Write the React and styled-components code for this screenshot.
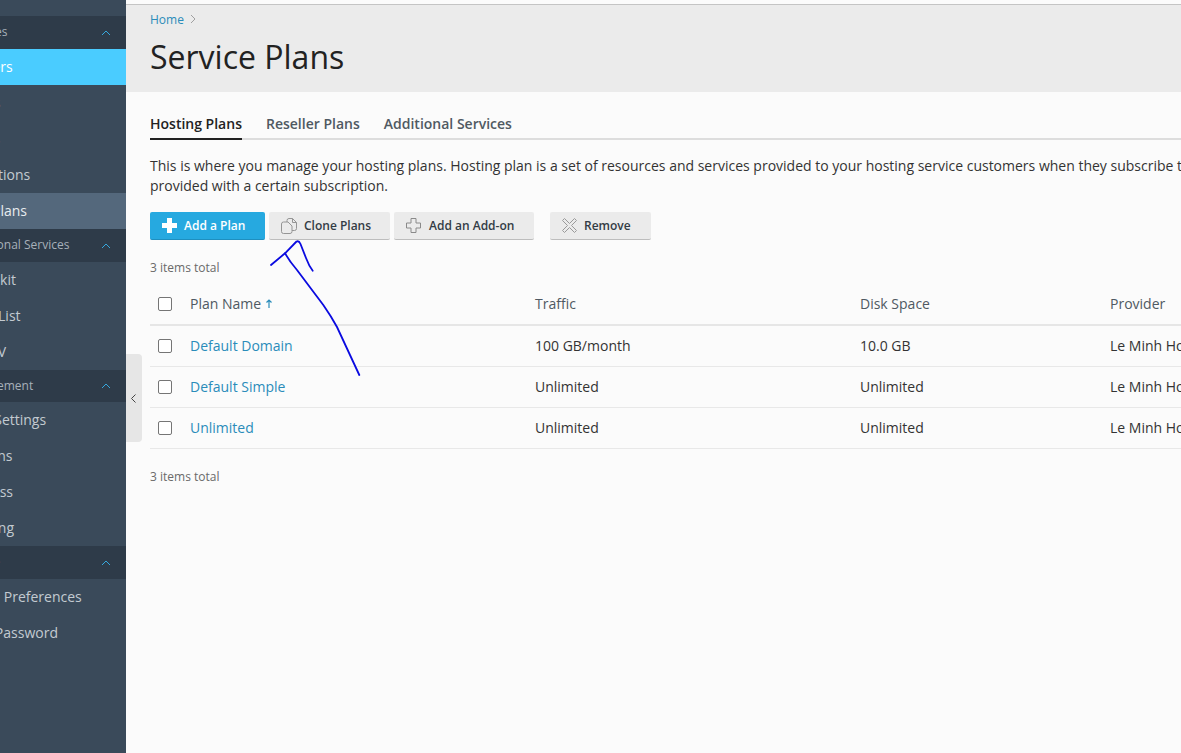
import React from "react";
import styled, { createGlobalStyle } from "styled-components";

const Global = createGlobalStyle`
  html, body { margin: 0; padding: 0; height: 100%; overflow: hidden; background: #fbfbfb; }
  #root { height: 100%; }
  * { box-sizing: border-box; }
  body { font-family: "Open Sans", "Liberation Sans", sans-serif; }
`;

const Page = styled.div`
  position: relative;
  display: flex;
  width: 1181px;
  height: 753px;
  overflow: hidden;
`;

const Sidebar = styled.nav`
  flex: 0 0 126px;
  background: #3a4a5a;
  padding-top: 16px;
  overflow: hidden;
`;

const SectionHead = styled.div`
  display: flex;
  align-items: center;
  height: ${(p) => p.$h || 33}px;
  background: #2e3b49;
  color: #a7b0b9;
  font-size: 12px;
  white-space: nowrap;
  padding-right: 15px;
`;

const SectionLabel = styled.span`
  flex: 1;
  margin-left: ${(p) => p.$offset}px;
  padding-bottom: 2px;
`;

const Item = styled.div`
  display: flex;
  align-items: center;
  height: 36px;
  padding-bottom: 2px;
  font-size: 14px;
  white-space: nowrap;
  background: ${(p) => (p.$primary ? "#4accff" : p.$current ? "#54687c" : "transparent")};
  color: ${(p) => (p.$primary ? "#ffffff" : p.$current ? "#e8ecef" : "#c3cad1")};
`;

const ItemLabel = styled.span`
  margin-left: -58px;
`;

const Main = styled.main`
  flex: 1;
  min-width: 0;
  overflow: hidden;
`;

const Header = styled.header`
  height: 92px;
  background: #ebebeb;
  border-top: 5px solid #c4c4c4;
  padding: 6px 24px 0;
  width: 1300px;
  position: relative;
  &::before {
    content: "";
    position: absolute;
    left: 0;
    right: 0;
    top: -5px;
    height: 4px;
    background: #fbfbfb;
  }
`;

const Breadcrumb = styled.div`
  display: flex;
  align-items: center;
  gap: 6px;
  height: 16px;
  font-size: 12px;
  color: #2a8cba;
`;

const Title = styled.h1`
  margin: 8px 0 0;
  font-size: 32px;
  font-weight: 400;
  line-height: 44px;
  color: #222222;
`;

const Content = styled.div`
  width: 1300px;
  padding: 0 0 0 24px;
`;

const Tabs = styled.div`
  display: flex;
  gap: 24px;
  margin-top: 22px;
  height: 26px;
  border-bottom: 2px solid #dddddd;
`;

const Tab = styled.div`
  height: 26px;
  font-size: 14px;
  line-height: 20px;
  font-weight: 600;
  color: ${(p) => (p.$active ? "#222222" : "#4f5962")};
  border-bottom: 2px solid ${(p) => (p.$active ? "#222222" : "transparent")};
`;

const Description = styled.p`
  margin: 16px 0 0;
  font-size: 14px;
  line-height: 20px;
  color: #333333;
  width: 1240px;
`;

const Toolbar = styled.div`
  display: flex;
  margin-top: 16px;
`;

const Button = styled.div`
  display: flex;
  align-items: center;
  gap: ${(p) => p.$gap || 7}px;
  width: ${(p) => p.$w}px;
  height: 28px;
  margin-right: ${(p) => p.$mr ?? 4}px;
  padding-left: ${(p) => p.$pl || 12}px;
  font-size: 12px;
  font-weight: 600;
  border-radius: 2px;
  background: ${(p) => (p.$primary ? "#26a9e0" : "#ebebeb")};
  color: ${(p) => (p.$primary ? "#ffffff" : "#333c45")};
  border-bottom: 1px solid ${(p) => (p.$primary ? "#1e8fc0" : "#bdbdbd")};
`;

const Count = styled.div`
  font-size: 12px;
  line-height: 16px;
  color: #6a6a6a;
  margin-top: ${(p) => p.$mt}px;
`;

const Table = styled.div`
  width: 1200px;
  margin-top: 8px;
`;

const Row = styled.div`
  display: grid;
  grid-template-columns: 40px 345px 325px 250px 1fr;
  align-items: center;
  height: ${(p) => (p.$head ? 42 : 41)}px;
  border-bottom: ${(p) => (p.$head ? "2px solid #e6e6e6" : "1px solid #e8e8e8")};
  font-size: 14px;
  color: #333333;
`;

const Box = styled.span`
  display: block;
  width: 14px;
  height: 14px;
  margin-left: 8px;
  background: #ffffff;
  border: 1.5px solid #757575;
  border-radius: 2px;
`;

const Cell = styled.div`
  padding-bottom: 2px;
`;

const HeadCell = styled(Cell)`
  color: #4f5962;
  display: flex;
  align-items: center;
  gap: 4px;
`;

const PlanLink = styled(Cell)`
  color: #2a8cba;
`;

const Handle = styled.div`
  position: absolute;
  left: 126px;
  top: 354px;
  width: 16px;
  height: 88px;
  background: #e6e6e6;
  border-radius: 0 4px 4px 0;
  display: flex;
  align-items: center;
  padding-left: 5px;
`;

const Scribble = styled.svg`
  position: absolute;
  left: 0;
  top: 0;
  pointer-events: none;
`;

const Chevron = () => (
  <svg width="10" height="6" viewBox="0 0 10 6" fill="none" stroke="#35a7dc" strokeWidth="1">
    <path d="M1 5l4-4 4 4" />
  </svg>
);

const Section = ({ label, h, offset = -36 }) => (
  <SectionHead $h={h}>
    <SectionLabel $offset={offset}>{label}</SectionLabel>
    <Chevron />
  </SectionHead>
);

const NavItem = ({ children, ...rest }) => (
  <Item {...rest}>
    <ItemLabel>{children}</ItemLabel>
  </Item>
);

const PlusIcon = () => (
  <svg width="15" height="15" viewBox="0 0 15 15" fill="#fff">
    <path d="M5 0h5v5h5v5h-5v5H5v-5H0V5h5z" />
  </svg>
);

const CloneIcon = () => (
  <svg width="16" height="16" viewBox="0 0 16 16" fill="none" stroke="#959595" strokeWidth="1">
    <path d="M6 4V2.500a2 2 0 0 1 2-2h3.500L15.500 4.500v6a2 2 0 0 1-2 2H11" />
    <path d="M11.500 .5v4h4" />
    <path d="M2.500 4H7l4 4v5.500a2 2 0 0 1-2 2H2.500a2 2 0 0 1-2-2V6a2 2 0 0 1 2-2z" />
  </svg>
);

const OutlinePlus = () => (
  <svg width="15" height="15" viewBox="0 0 15 15" fill="none" stroke="#8a8a8a" strokeWidth="1">
    <path d="M5 .5h5v4.500h4.500v5H10v4.500H5V10H.5V5H5z" />
  </svg>
);

const OutlineX = () => (
  <svg width="15" height="15" viewBox="0 0 15 15" fill="none" stroke="#9a9a9a" strokeWidth="1">
    <path d="M2.500.5l5 5 5-5 2 2-5 5 5 5-2 2-5-5-5 5-2-2 5-5-5-5z" />
  </svg>
);

const plans = [
  ["Default Domain", "100 GB/month", "10.0 GB"],
  ["Default Simple", "Unlimited", "Unlimited"],
  ["Unlimited", "Unlimited", "Unlimited"],
];

export default function App() {
  return (
    <Page>
      <Global />
      <Sidebar>
        <Section label="Services" offset={-38} />
        <NavItem $primary>Customers</NavItem>
        <NavItem>Resellers</NavItem>
        <NavItem>Domains</NavItem>
        <NavItem>Subscriptions</NavItem>
        <NavItem $current>Service Plans</NavItem>
        <Section label="Additional Services" />
        <NavItem>SEO Toolkit</NavItem>
        <NavItem>Website List</NavItem>
        <NavItem>Mobile TV</NavItem>
        <Section label="Management" h={32} offset={-41} />
        <NavItem>Tools &amp; Settings</NavItem>
        <NavItem>Extensions</NavItem>
        <NavItem>WordPress</NavItem>
        <NavItem>Monitoring</NavItem>
        <Section label="Profile" />
        <NavItem>Interface Preferences</NavItem>
        <NavItem>Change Password</NavItem>
      </Sidebar>
      <Main>
        <Header>
          <Breadcrumb>
            Home
            <svg width="6" height="10" viewBox="0 0 6 10" fill="none" stroke="#a0a0a0" strokeWidth="1">
              <path d="M1 1l4 4-4 4" />
            </svg>
          </Breadcrumb>
          <Title>Service Plans</Title>
        </Header>
        <Content>
          <Tabs>
            <Tab $active>Hosting Plans</Tab>
            <Tab>Reseller Plans</Tab>
            <Tab>Additional Services</Tab>
          </Tabs>
          <Description>
            This is where you manage your hosting plans. Hosting plan is a set of resources and services provided to your hosting service customers when they subscribe to a plan. The resources are
            provided with a certain subscription.
          </Description>
          <Toolbar>
            <Button $primary $w={115} $pl={12} $gap={7}>
              <PlusIcon />
              Add a Plan
            </Button>
            <Button $w={121} $pl={12} $gap={7}>
              <CloneIcon />
              Clone Plans
            </Button>
            <Button $w={140} $mr={16} $pl={12} $gap={8}>
              <OutlinePlus />
              Add an Add-on
            </Button>
            <Button $w={101} $mr={0} $pl={12} $gap={7}>
              <OutlineX />
              Remove
            </Button>
          </Toolbar>
          <Count $mt={20}>3 items total</Count>
          <Table>
            <Row $head>
              <Box />
              <HeadCell>
                Plan Name
                <svg width="8" height="9" viewBox="0 0 8 9" fill="none" stroke="#2a8cba" strokeWidth="1.200">
                  <path d="M4 9V1M1.500 3.500L4 1l2.500 2.500" />
                </svg>
              </HeadCell>
              <HeadCell>Traffic</HeadCell>
              <HeadCell>Disk Space</HeadCell>
              <HeadCell>Provider</HeadCell>
            </Row>
            {plans.map(([name, traffic, disk]) => (
              <Row key={name}>
                <Box />
                <PlanLink>{name}</PlanLink>
                <Cell>{traffic}</Cell>
                <Cell>{disk}</Cell>
                <Cell>Le Minh Hoang</Cell>
              </Row>
            ))}
          </Table>
          <Count $mt={20}>3 items total</Count>
        </Content>
      </Main>
      <Handle>
        <svg width="5" height="9" viewBox="0 0 5 9" fill="none" stroke="#444" strokeWidth="1">
          <path d="M4.500 .5l-4 4 4 4" />
        </svg>
      </Handle>
      <Scribble width="1181" height="753" viewBox="0 0 1181 753" fill="none" stroke="#0a0ae0" strokeWidth="1.800" strokeLinecap="round" strokeLinejoin="round">
        <path d="M271 265L285 253.300L296.500 241.500Q299 240.500 300.500 244L306 258Q309 266 312.700 270.700" />
        <path d="M285 253.300Q290 262 297 270L323.300 305Q331 316 337 327L350 355L359.300 375" />
      </Scribble>
    </Page>
  );
}
